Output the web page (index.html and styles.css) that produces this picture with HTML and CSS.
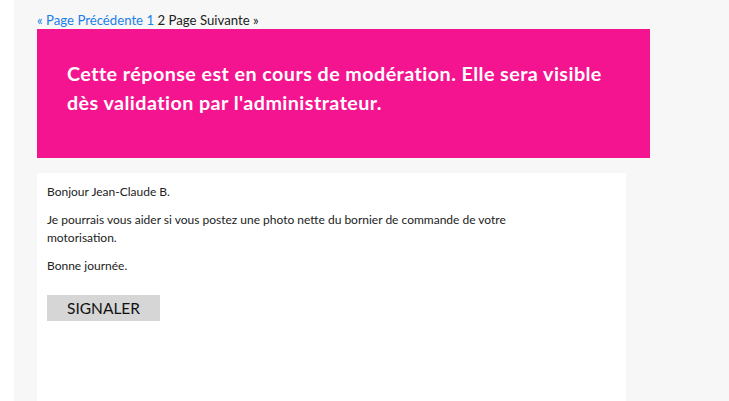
FILE: index.html
```html
<!DOCTYPE html>
<html lang="fr">
<head>
<meta charset="utf-8">
<title>Réponse</title>
<link rel="stylesheet" href="styles.css">
</head>
<body>
<div class="page">
  <div class="pager">
    <a class="pager-link" href="#">« Page Précédente</a>
    <a class="pager-link" href="#">1</a>
    <span class="pager-current">2</span>
    <span class="pager-next">Page Suivante »</span>
  </div>
  <div class="alert">
    Cette réponse est en cours de modération. Elle sera visible<br>dès validation par l'administrateur.
  </div>
  <div class="post">
    <p>Bonjour Jean-Claude B.</p>
    <p>Je pourrais vous aider si vous postez une photo nette du bornier de commande de votre<br>motorisation.</p>
    <p>Bonne journée.</p>
    <button class="report" type="button">SIGNALER</button>
  </div>
</div>
</body>
</html>
```
FILE: styles.css
```css
html, body {
  margin: 0;
  padding: 0;
  background: #ffffff;
  height: 100%;
}
body {
  font-family: Lato, "Open Sans", sans-serif;
  color: #222222;
  overflow: hidden;
}
.page {
  margin-left: 14px;
  background: #f7f7f7;
  min-height: 401px;
  padding: 11px 0 0 23px;
  box-sizing: border-box;
}
.pager {
  font-size: 13.2px;
  line-height: 18px;
  color: #222;
}
.pager-link {
  color: #1a7fe8;
  text-decoration: none;
}
.alert {
  width: 613px;
  height: 129px;
  box-sizing: border-box;
  background: #f5148f;
  color: #ffffff;
  font-weight: 700;
  font-size: 19.7px;
  letter-spacing: 0.45px;
  line-height: 29px;
  padding: 30px 5px 0 30px;
}
.post {
  margin-top: 15px;
  width: 589px;
  min-height: 240px;
  background: #ffffff;
  padding: 10px;
  box-sizing: border-box;
  font-size: 12px;
  line-height: 18px;
}
.post p {
  margin: 0 0 10px;
}
.report {
  margin-top: 10px;
  width: 113px;
  height: 26px;
  border: 0;
  background: #d6d6d6;
  font-family: inherit;
  font-size: 15.5px;
  color: #111;
  padding: 0;
}
```
